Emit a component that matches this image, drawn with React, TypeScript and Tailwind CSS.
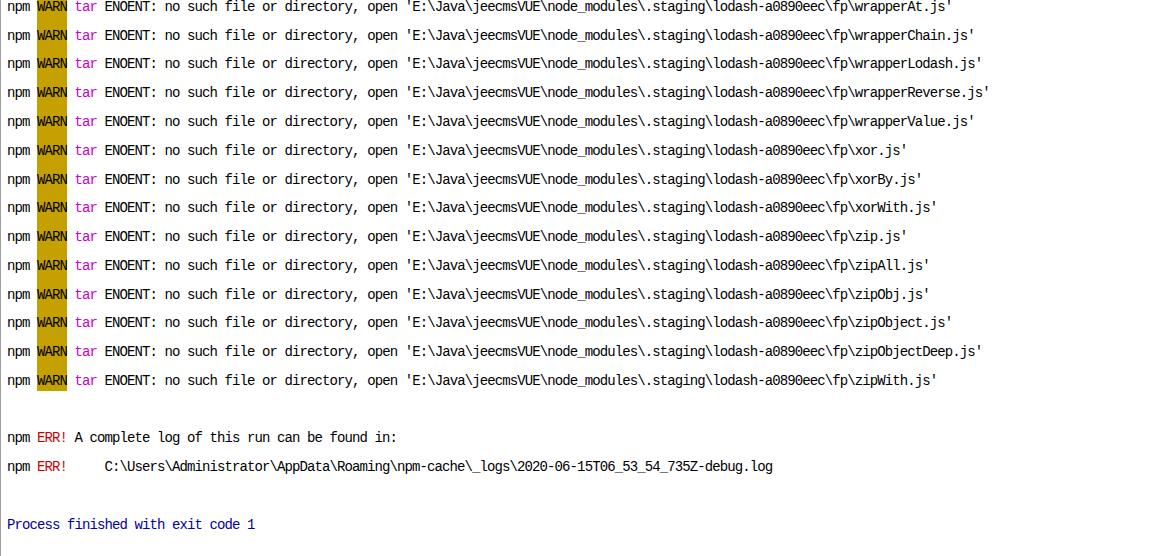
import React from 'react'

// files listed in the npm warnings
const files = [
  'wrapperAt.js',
  'wrapperChain.js',
  'wrapperLodash.js',
  'wrapperReverse.js',
  'wrapperValue.js',
  'xor.js',
  'xorBy.js',
  'xorWith.js',
  'zip.js',
  'zipAll.js',
  'zipObj.js',
  'zipObject.js',
  'zipObjectDeep.js',
  'zipWith.js',
]

const row = 'h-[28.77px] leading-[38px] whitespace-pre'

function WarnLine({ file }: { file: string }) {
  return (
    <div className={row}>
      npm{' '}
      <span className="inline-block h-[28.77px] align-top bg-[#c4a000]">WARN</span>{' '}
      <span className="text-[#c800c8]">tar</span> ENOENT: no such file or directory, open
      {" 'E:\\Java\\jeecmsVUE\\node_modules\\.staging\\lodash-a0890eec\\fp\\" + file + "'"}
    </div>
  )
}

export default function App() {
  return (
    <div
      className="h-[556px] w-[1151px] overflow-hidden bg-white border-l border-[#a0a0a0] pl-[6px] text-black text-[14px] tracking-[-0.9px]"
      style={{ fontFamily: '"Liberation Mono", monospace' }}
    >
      <div className="-mt-[12.1px]">
        {files.map((f) => (
          <WarnLine key={f} file={f} />
        ))}
        <div className={row}> </div>
        <div className={row}>
          npm <span className="text-[#cc0000]">ERR!</span> A complete log of this run can be found in:
        </div>
        <div className={row}>
          npm <span className="text-[#cc0000]">ERR!</span>
          {'     C:\\Users\\Administrator\\AppData\\Roaming\\npm-cache\\_logs\\2020-06-15T06_53_54_735Z-debug.log'}
        </div>
        <div className={row}> </div>
        <div className={`${row} text-[#0000a8]`}>Process finished with exit code 1</div>
      </div>
    </div>
  )
}
